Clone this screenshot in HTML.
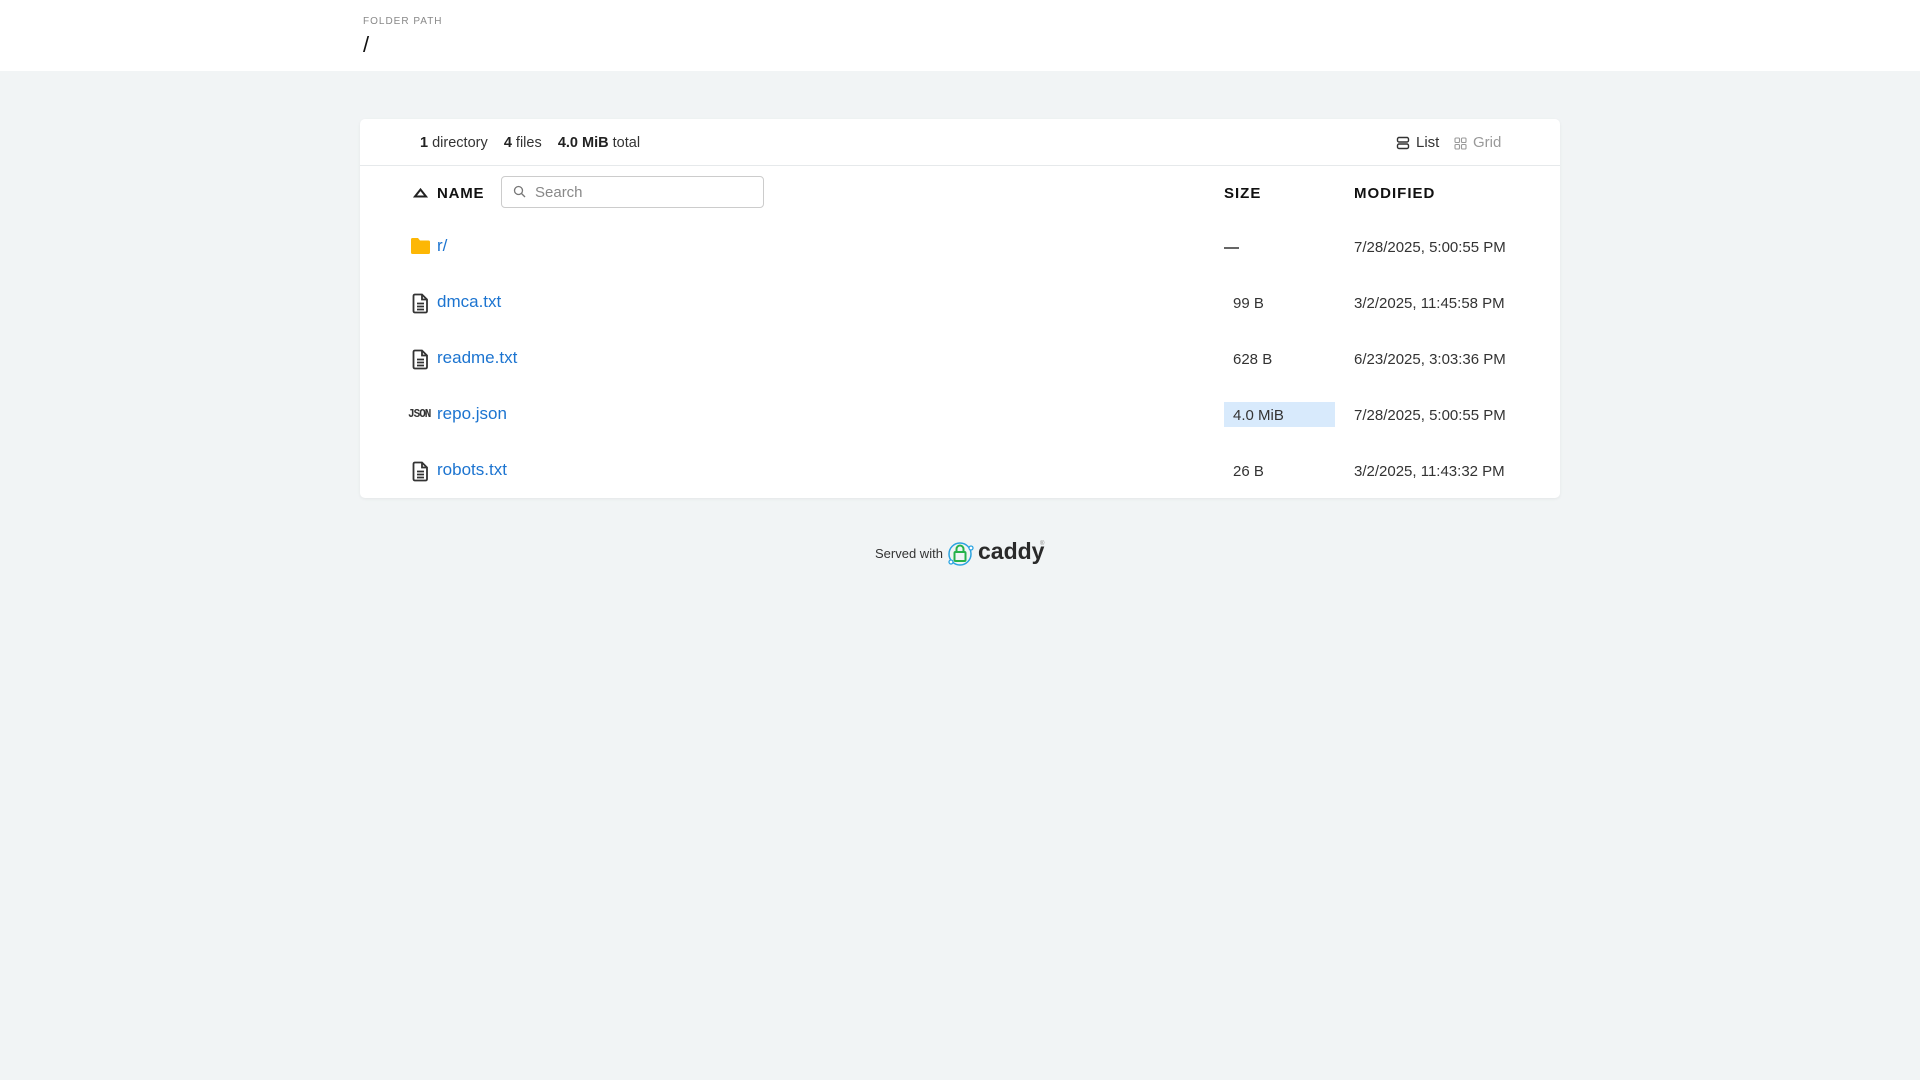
<!DOCTYPE html>
<html><head><meta charset="utf-8"><style>
*{box-sizing:border-box;margin:0;padding:0}
body{width:1920px;height:1080px;background:#f1f4f5;font-family:"Liberation Sans",sans-serif;color:#222;position:relative;overflow:hidden}
.hdr{position:absolute;left:0;top:0;width:1920px;height:71px;background:#fff}
.abs{position:absolute;white-space:nowrap}
.card{position:absolute;left:360px;top:119px;width:1200px;height:379px;background:#fff;border-radius:5px;box-shadow:0 1px 3px rgba(0,0,0,.06)}
.sep{position:absolute;left:360px;top:165px;width:1200px;height:1px;background:#e6e9eb}
.th{font-weight:bold;font-size:15px;letter-spacing:1px;color:#111}
.nm{font-size:17px;color:#1c74d0}
.sz,.md{font-size:15px;color:#333}
</style></head><body>
<div class="hdr"></div>
<div class="abs" style="left:363px;top:16px;font-size:10px;letter-spacing:1px;color:#888">FOLDER PATH</div>
<div class="abs" style="left:363px;top:32px;font-size:22px;color:#111">/</div>
<div class="card"></div>
<div class="sep"></div>
<div class="abs" style="left:420px;top:135px;font-size:14.5px;color:#333"><b style="color:#222">1</b> directory &nbsp;&nbsp; <b style="color:#222">4</b> files &nbsp;&nbsp; <b style="color:#222">4.0 MiB</b> total</div>
<svg class="abs" style="left:1396px;top:136px" width="14" height="14" viewBox="0 0 14 14" fill="none" stroke="#333" stroke-width="1.4"><rect x="1.5" y="1.5" width="11" height="4.5" rx="1.5"/><rect x="1.5" y="8" width="11" height="4.5" rx="1.5"/></svg>
<div class="abs" style="left:1416px;top:134px;font-size:15px;color:#333">List</div>
<svg class="abs" style="left:1454px;top:137px" width="13" height="13" viewBox="0 0 13 13" fill="none" stroke="#999" stroke-width="1.1"><rect x="1" y="1" width="4.5" height="4.5" rx="1"/><rect x="7.5" y="1" width="4.5" height="4.5" rx="1"/><rect x="1" y="7.5" width="4.5" height="4.5" rx="1"/><rect x="7.5" y="7.5" width="4.5" height="4.5" rx="1"/></svg>
<div class="abs" style="left:1473px;top:134px;font-size:15px;color:#999">Grid</div>
<svg class="abs" style="left:413px;top:188px" width="15" height="10" viewBox="0 0 15 10"><path d="M7.5 1.5L13 8.5H2Z" fill="none" stroke="#222" stroke-width="2"/></svg>
<div class="abs th" style="left:437px;top:185px;letter-spacing:0.8px">NAME</div>
<div class="abs" style="left:501px;top:176px;width:263px;height:32px;border:1px solid #ccc;border-radius:4px"></div>
<svg class="abs" style="left:513px;top:185px" width="13" height="13" viewBox="0 0 13 13" fill="none" stroke="#777" stroke-width="1.3"><circle cx="5.5" cy="5.5" r="4"/><path d="M8.5 8.5L12 12"/></svg>
<div class="abs" style="left:535px;top:184px;font-size:15px;color:#888">Search</div>
<div class="abs th" style="left:1224px;top:185px">SIZE</div>
<div class="abs th" style="left:1354px;top:185px">MODIFIED</div>

<svg class="abs" style="left:410px;top:237px" width="21" height="18" viewBox="0 0 21 18"><path d="M1 2.5Q1 1 2.5 1H8l2 2.5h8.5Q20 3.5 20 5v10.5Q20 17 18.5 17h-16Q1 17 1 15.5Z" fill="#fdb705"/></svg>
<div class="abs nm" style="left:437px;top:236px">r/</div>
<div class="abs" style="left:1224px;top:247px;width:15px;height:2px;background:#666"></div>
<div class="abs md" style="left:1354px;top:239px">7/28/2025, 5:00:55 PM</div>

<svg class="abs" style="left:412px;top:293px" width="17" height="21" viewBox="0 0 17 21" fill="none" stroke="#333" stroke-width="1.8"><path d="M3 1.5h7l5 5v11.5q0 1.5-1.5 1.5h-10.5q-1.5 0-1.5-1.5v-15q0-1.5 1.5-1.5z"/><path d="M10 1.5v5h5M5 10.5h7M5 13.5h7M5 16.5h7"/></svg>
<div class="abs nm" style="left:437px;top:292px">dmca.txt</div>
<div class="abs sz" style="left:1233px;top:295px">99 B</div>
<div class="abs md" style="left:1354px;top:295px">3/2/2025, 11:45:58 PM</div>

<svg class="abs" style="left:412px;top:349px" width="17" height="21" viewBox="0 0 17 21" fill="none" stroke="#333" stroke-width="1.8"><path d="M3 1.5h7l5 5v11.5q0 1.5-1.5 1.5h-10.5q-1.5 0-1.5-1.5v-15q0-1.5 1.5-1.5z"/><path d="M10 1.5v5h5M5 10.5h7M5 13.5h7M5 16.5h7"/></svg>
<div class="abs nm" style="left:437px;top:348px">readme.txt</div>
<div class="abs sz" style="left:1233px;top:351px">628 B</div>
<div class="abs md" style="left:1354px;top:351px">6/23/2025, 3:03:36 PM</div>

<div class="abs" style="left:408px;top:409px;font-size:11px;font-weight:bold;font-family:'Liberation Mono',monospace;color:#333;letter-spacing:-1px;transform:scaleY(1.1)">JSON</div>
<div class="abs nm" style="left:437px;top:404px">repo.json</div>
<div class="abs" style="left:1224px;top:402px;width:111px;height:25px;background:#d8eafc"></div>
<div class="abs sz" style="left:1233px;top:407px">4.0 MiB</div>
<div class="abs md" style="left:1354px;top:407px">7/28/2025, 5:00:55 PM</div>

<svg class="abs" style="left:412px;top:461px" width="17" height="21" viewBox="0 0 17 21" fill="none" stroke="#333" stroke-width="1.8"><path d="M3 1.5h7l5 5v11.5q0 1.5-1.5 1.5h-10.5q-1.5 0-1.5-1.5v-15q0-1.5 1.5-1.5z"/><path d="M10 1.5v5h5M5 10.5h7M5 13.5h7M5 16.5h7"/></svg>
<div class="abs nm" style="left:437px;top:460px">robots.txt</div>
<div class="abs sz" style="left:1233px;top:463px">26 B</div>
<div class="abs md" style="left:1354px;top:463px">3/2/2025, 11:43:32 PM</div>

<div class="abs" style="left:875px;top:546px;font-size:13px;color:#333">Served with</div>
<svg class="abs" style="left:946px;top:540px" width="30" height="28" viewBox="0 0 30 28"><circle cx="14" cy="14" r="11" fill="none" stroke="#2aa3e0" stroke-width="1.5"/><rect x="8.5" y="12" width="11" height="9" rx="1" fill="none" stroke="#27b24a" stroke-width="2"/><path d="M10.5 12V9a3.5 3.5 0 0 1 7 0v3" fill="none" stroke="#27b24a" stroke-width="2"/><circle cx="25" cy="8" r="2" fill="#fff" stroke="#2aa3e0" stroke-width="1.3"/><circle cx="5" cy="22" r="2" fill="#fff" stroke="#2aa3e0" stroke-width="1.3"/></svg>
<div class="abs" style="left:978px;top:538px;font-size:23px;font-weight:bold;color:#2a2a2a;letter-spacing:0">caddy</div>
<div class="abs" style="left:1040px;top:541px;font-size:6px;color:#888">®</div>
</body></html>
